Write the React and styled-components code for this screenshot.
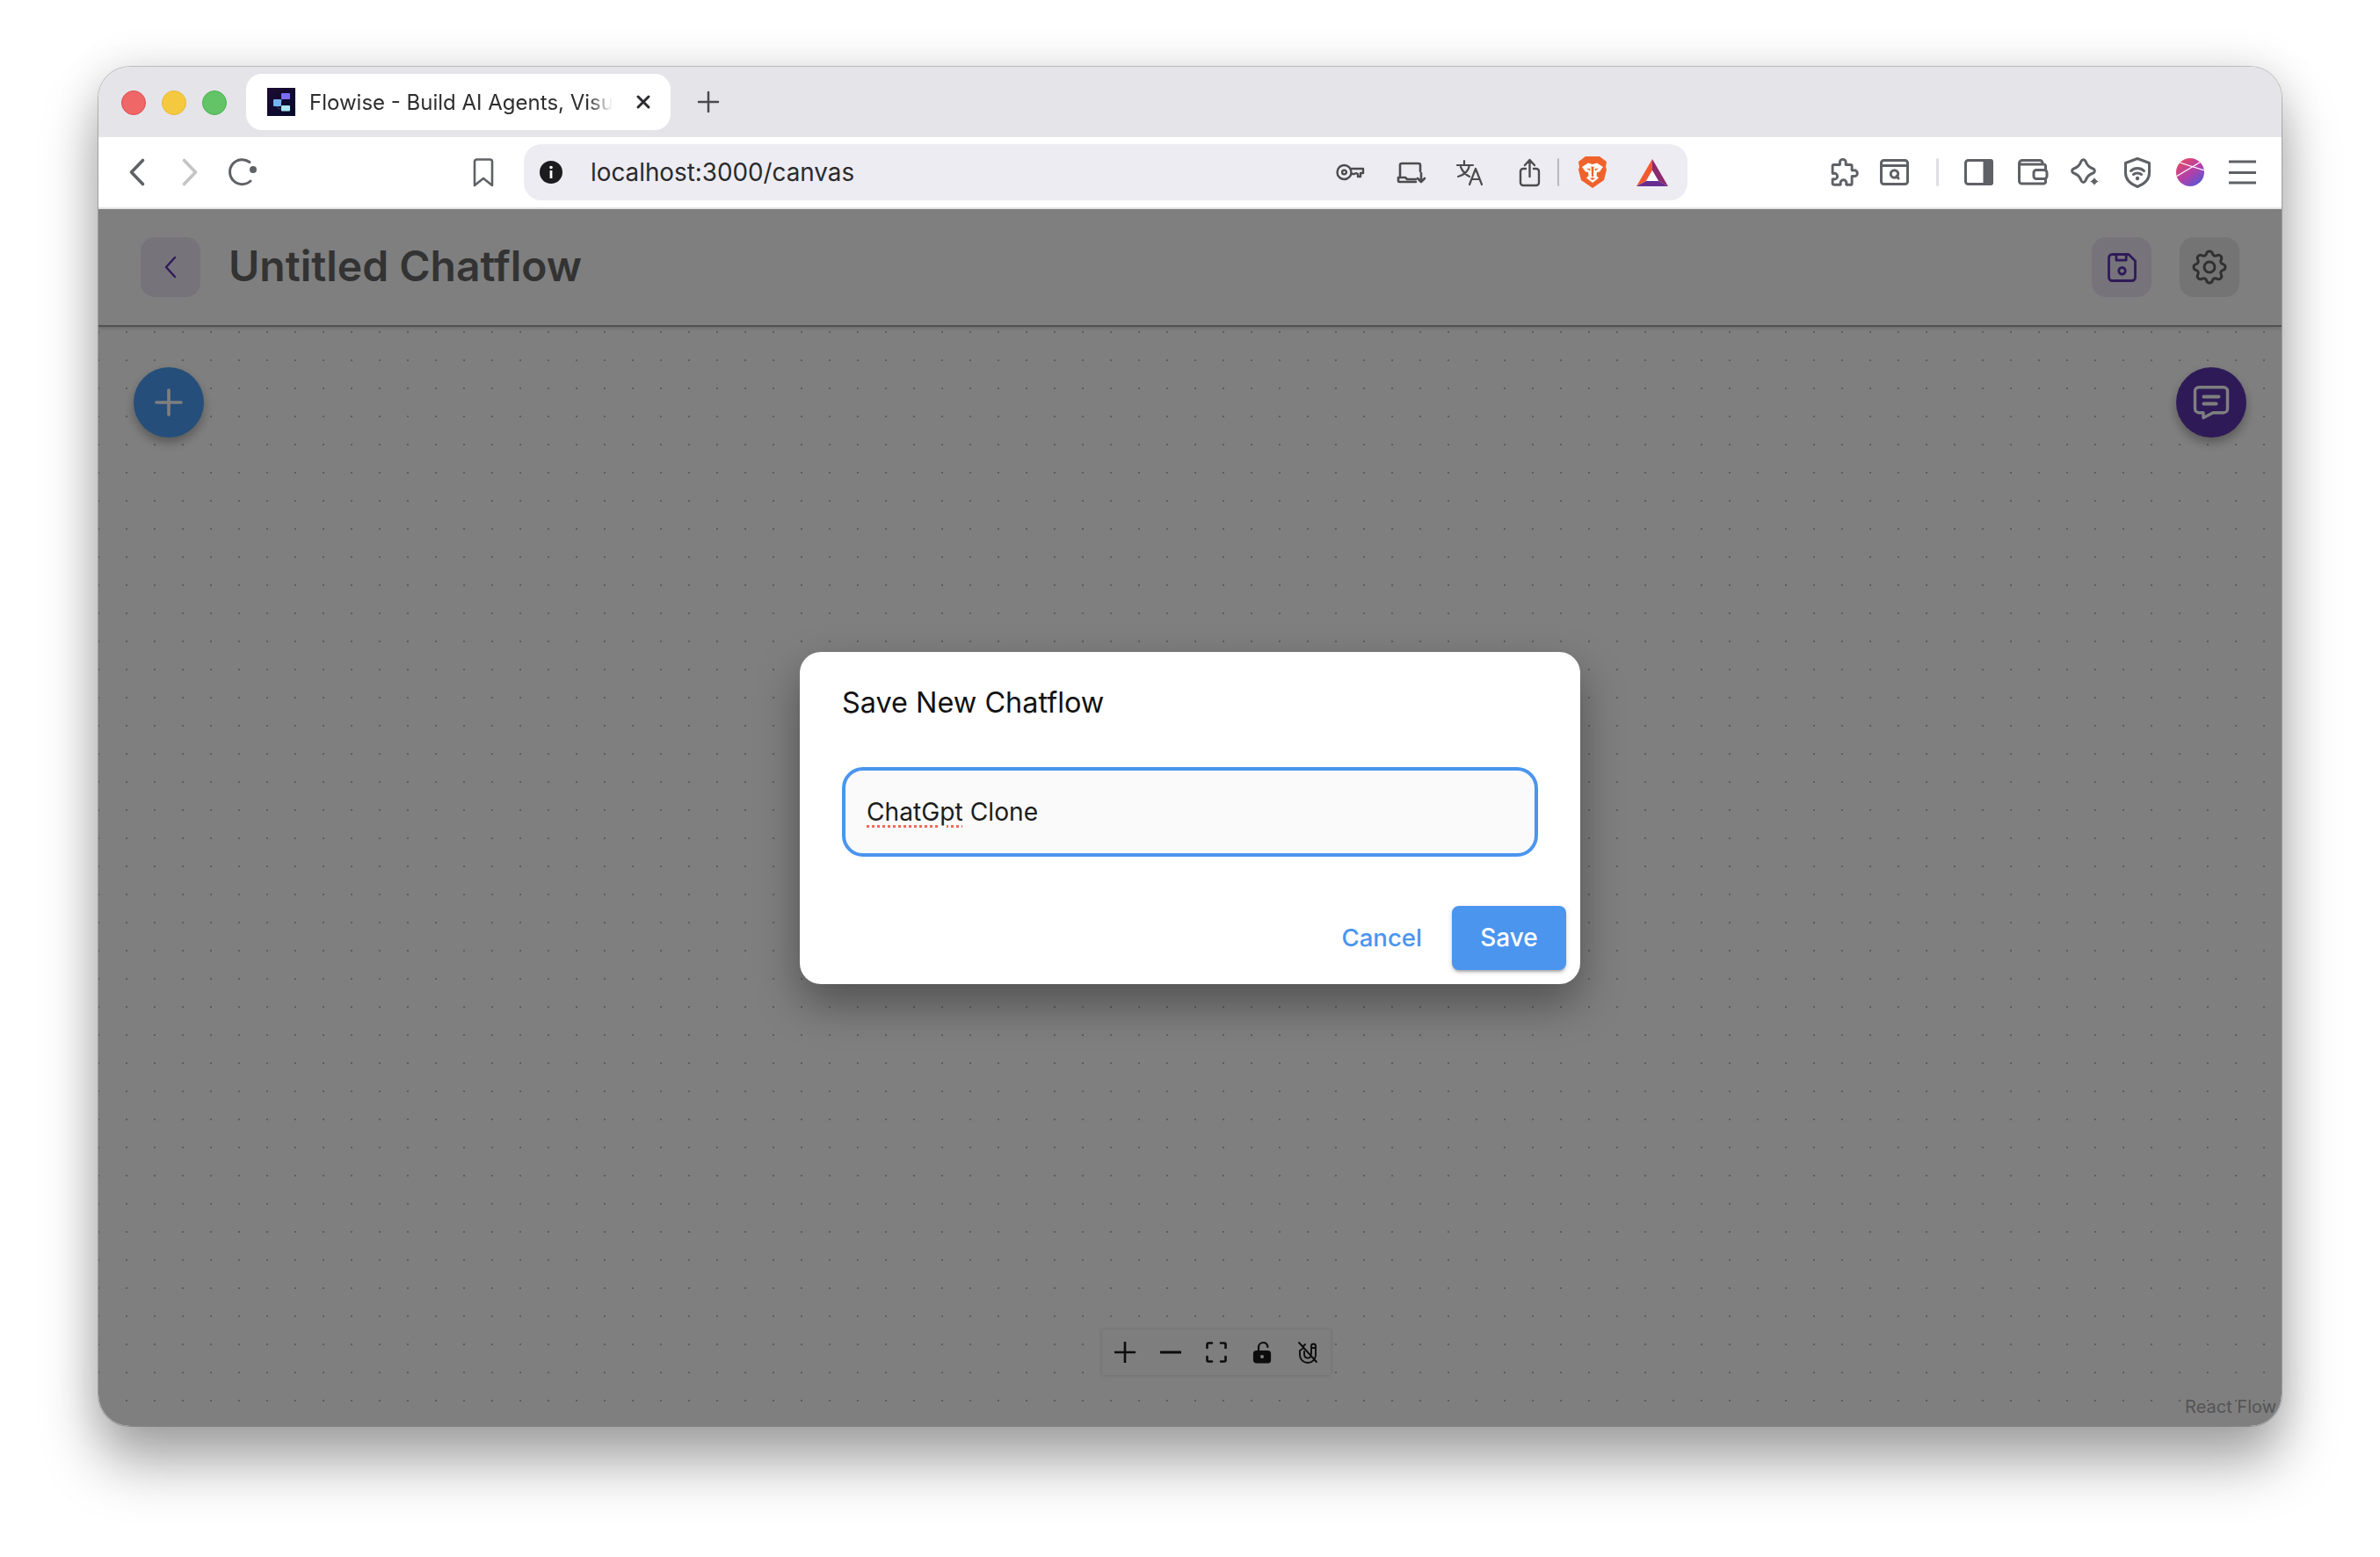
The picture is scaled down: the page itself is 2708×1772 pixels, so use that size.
import React from "react";
import styled, { createGlobalStyle } from "styled-components";

const Global = createGlobalStyle`
  html, body { margin: 0; padding: 0; background: #fff; }
  body { font-family: Inter, "Liberation Sans", sans-serif; width: 2708px; height: 1772px; overflow: hidden; }
  * { box-sizing: border-box; }
`;

const Page = styled.div`
  width: 2708px;
  height: 1772px;
  padding: 76px 112px 149px;
`;
const BrowserWindow = styled.div`
  width: 100%;
  height: 100%;
  display: flex;
  flex-direction: column;
  border-radius: 36px;
  overflow: hidden;
  background: #fff;
  box-shadow: 0 0 0 1px rgba(0, 0, 0, 0.2), 0 42px 64px rgba(0, 0, 0, 0.34), 0 0 50px rgba(0, 0, 0, 0.12);
`;
const TabStrip = styled.div`
  height: 80px;
  flex: none;
  display: flex;
  align-items: flex-start;
  padding: 8px 0 0 26px;
  background: #e4e4e9;
`;
const Light = styled.span`
  width: 28px;
  height: 28px;
  margin: 19px 18px 0 0;
  border-radius: 50%;
  background: ${(p) => p.$fill};
  border: 1px solid ${(p) => p.$edge};
  flex: none;
`;
const Tab = styled.div`
  width: 483px;
  height: 64px;
  margin-left: 4px;
  display: flex;
  align-items: center;
  padding: 0 0 0 24px;
  border-radius: 18px;
  background: #fff;
`;
const TabTitle = styled.div`
  width: 352px;
  margin-left: 16px;
  font-size: 24px;
  color: #2e2e30;
  white-space: nowrap;
  -webkit-mask-image: linear-gradient(to right, #000 90%, transparent 98%);
  mask-image: linear-gradient(to right, #000 90%, transparent 98%);
`;
const Toolbar = styled.div`
  height: 82px;
  flex: none;
  display: flex;
  align-items: center;
  padding: 0 0 0 36px;
  background: #fff;
  border-bottom: 2px solid #e6e6ea;
`;
const Icon = styled.svg`
  flex: none;
  display: block;
  margin-left: ${(p) => p.$ml || 0}px;
  overflow: visible;
  fill: none;
  stroke: ${(p) => p.$stroke || "#5f6166"};
  stroke-width: ${(p) => p.$sw || 3};
  stroke-linecap: round;
  stroke-linejoin: round;
`;
const NewTabIcon = styled(Icon)`
  margin-top: 21px;
`;
const UrlBar = styled.div`
  width: 1324px;
  height: 64px;
  margin-left: 34px;
  flex: none;
  display: flex;
  align-items: center;
  padding: 0 22px 0 18px;
  border-radius: 20px;
  background: #edecf2;
`;
const UrlText = styled.span`
  margin-left: 32px;
  font-size: 27.8px;
  color: #2a2a2c;
  flex: 1;
`;
const BarDivider = styled.span`
  width: ${(p) => p.$w}px;
  height: 32px;
  margin-left: ${(p) => p.$ml}px;
  background: ${(p) => p.$c};
  border-radius: 2px;
  flex: none;
`;

const AppArea = styled.div`
  position: relative;
  flex: 1;
  min-height: 0;
  display: flex;
  flex-direction: column;
`;
const Header = styled.header`
  height: 134px;
  flex: none;
  display: flex;
  align-items: center;
  padding: 0 48px;
  background: #fff;
  border-bottom: 2px solid #a2a2a2;
  box-shadow: 0 2px 4px rgba(0, 0, 0, 0.14);
  position: relative;
  z-index: 1;
`;
const SquareButton = styled.button`
  width: 68px;
  height: 68px;
  flex: none;
  padding: 0;
  border: 0;
  border-radius: 16px;
  display: flex;
  align-items: center;
  justify-content: center;
  background: ${(p) => p.$bg};
  margin-left: ${(p) => p.$ml || 0}px;
`;
const PageTitle = styled.h1`
  margin: 0 0 0 32px;
  padding-bottom: 3px;
  flex: 1;
  font-size: 48px;
  font-weight: 600;
  color: #666;
`;
const Canvas = styled.main`
  position: relative;
  flex: 1;
  background-color: #fff;
  background-image: radial-gradient(circle, #bcbcbc 1.2px, transparent 1.5px);
  background-size: 32px 32px;
  background-position: -16px -10px;
`;
const Fab = styled.button`
  position: absolute;
  top: 46px;
  ${(p) => p.$side}: 40px;
  width: 80px;
  height: 80px;
  padding: 0;
  border: 0;
  border-radius: 50%;
  display: flex;
  align-items: center;
  justify-content: center;
  background: ${(p) => p.$bg};
  box-shadow: 0 6px 12px rgba(0, 0, 0, 0.3);
`;
const Controls = styled.div`
  position: absolute;
  left: 1142px;
  bottom: 58px;
  display: flex;
  background: #fcfcfc;
  box-shadow: 0 0 5px rgba(0, 0, 0, 0.16);
`;
const ControlButton = styled.button`
  width: 52px;
  height: 52px;
  padding: 0;
  border: 0;
  background: transparent;
  display: flex;
  align-items: center;
  justify-content: center;
`;
const Attribution = styled.span`
  position: absolute;
  right: 6px;
  bottom: 10px;
  font-size: 20px;
  color: #aaa;
`;
const Overlay = styled.div`
  position: absolute;
  inset: 0;
  z-index: 2;
  display: flex;
  align-items: center;
  justify-content: center;
  background: rgba(0, 0, 0, 0.5);
`;
const Dialog = styled.div`
  width: 888px;
  height: 378px;
  display: flex;
  flex-direction: column;
  padding: 38px 16px 16px 48px;
  border-radius: 24px;
  background: #fff;
  box-shadow: 0 22px 50px rgba(0, 0, 0, 0.36);
`;
const DialogTitle = styled.h2`
  margin: 0;
  font-size: 32.4px;
  line-height: 40px;
  font-weight: 400;
  color: #111;
`;
const NameField = styled.div`
  width: 792px;
  height: 102px;
  margin-top: 53px;
  display: flex;
  align-items: center;
  padding: 0 24px;
  border: 4px solid #4a95ef;
  border-radius: 24px;
  background: #fafafa;
  font-size: 28.2px;
  color: #1c1c1c;
  white-space: pre;
`;
const Misspelled = styled.span`
  text-decoration: underline dotted #f0695c 3px;
  text-underline-offset: 5px;
`;
const DialogActions = styled.div`
  margin-top: auto;
  display: flex;
  align-items: center;
  justify-content: flex-end;
  gap: 34px;
`;
const CancelButton = styled.button`
  padding: 0;
  border: 0;
  background: none;
  font: 500 27.6px Inter, sans-serif;
  color: #4a95ef;
`;
const SaveButton = styled.button`
  width: 130px;
  height: 73px;
  border: 0;
  padding: 0;
  border-radius: 8px;
  font: 500 28px Inter, sans-serif;
  color: #fff;
  background: #4b95ef;
  box-shadow: 0 3px 3px -1px rgba(0, 0, 0, 0.25), 0 2px 6px rgba(0, 0, 0, 0.14);
`;

const Favicon = () => (
  <Icon width="32" height="32" viewBox="0 0 32 32" $sw={1}>
    <defs>
      <linearGradient id="fav" x1="0" y1="0" x2="1" y2="1">
        <stop offset="0" stopColor="#1d0b33" />
        <stop offset="1" stopColor="#040a2a" />
      </linearGradient>
    </defs>
    <rect width="32" height="32" fill="url(#fav)" stroke="none" />
    <path d="M16 16c1-4 1-7 2-7M11 21c1 3 3 3 6 3" stroke="#33506e" />
    <rect x="16" y="6" width="10" height="7" rx="1" fill="#7b6cf6" stroke="none" />
    <rect x="7" y="13" width="9" height="8" rx="1" fill="#72b3f5" stroke="none" />
    <rect x="16" y="20" width="10" height="6.5" rx="1" fill="#abe7f0" stroke="none" />
  </Icon>
);

const Brave = () => (
  <Icon width="32" height="36" viewBox="0 0 32 36" $ml={22} $stroke="none">
    <path fill="#f0622c" d="M8 0H24L28 3L32 6L31 12L32 15L29 27L16 36L3 27L0 15L1 12L0 6L4 3Z" />
    <path fill="#fff" d="M4 12L11 7.5L16 9L21 7.5L28 12L24 17.5L21 18L20.5 22L23 24.5L16 30L9 24.5L11.5 22L11 18L8 17.5Z" />
    <path fill="#f0622c" d="M9 13.5L13.5 14L13 16.5ZM23 13.5L18.5 14L19 16.5ZM14.5 11L16 12L17.5 11L17 23H15ZM13 25L16 24L19 25L16 27Z" />
  </Icon>
);

const Bat = () => (
  <Icon width="36" height="31" viewBox="0 0 36 31" $ml={34} $stroke="none">
    <polygon fill="#f15a30" points="18,0 18,13 11,25 0,31" />
    <polygon fill="#8c2b6e" points="18,0 36,31 25,25 18,13" />
    <polygon fill="#662d91" points="0,31 11,25 25,25 36,31" />
    <polygon fill="#fff" points="18,13 11,25 25,25" />
  </Icon>
);

const Avatar = () => (
  <Icon width="32" height="32" viewBox="0 0 32 32" $ml={29} $stroke="#fff" $sw={1.2}>
    <defs>
      <linearGradient id="ava" x1="0.15" y1="0.1" x2="0.8" y2="0.95">
        <stop offset="0" stopColor="#e2486b" />
        <stop offset="0.55" stopColor="#b040ac" />
        <stop offset="1" stopColor="#5a55d2" />
      </linearGradient>
      <clipPath id="avc"><circle cx="16" cy="16" r="16" /></clipPath>
    </defs>
    <circle cx="16" cy="16" r="16" fill="url(#ava)" stroke="none" />
    <path clipPath="url(#avc)" d="M0 21L30 3M4 5L32 14" />
  </Icon>
);

export default function App() {
  return (
    <Page>
      <Global />
      <BrowserWindow>
        <TabStrip>
          <Light $fill="#ef6767" $edge="#e24b4e" />
          <Light $fill="#f4c940" $edge="#e9b82e" />
          <Light $fill="#62c467" $edge="#4bb150" />
          <Tab>
            <Favicon />
            <TabTitle>Flowise - Build AI Agents, Visu</TabTitle>
            <Icon width="16" height="16" viewBox="0 0 16 16" $ml={20} $stroke="#2c2c2e">
              <path d="M2 2l12 12M14 2L2 14" />
            </Icon>
          </Tab>
          <NewTabIcon width="22" height="22" viewBox="0 0 22 22" $ml={32} $stroke="#4a4a4e" $sw={2.5}>
            <path d="M11 0v22M0 11h22" />
          </NewTabIcon>
        </TabStrip>

        <Toolbar>
          <Icon width="16" height="30" viewBox="0 0 16 30" $sw={3.6}><path d="M14.5 1.5L1.5 15l13 13.5" /></Icon>
          <Icon width="16" height="30" viewBox="0 0 16 30" $ml={44} $sw={3.6} $stroke="#c4c4c4"><path d="M1.5 1.5L14.5 15l-13 13.5" /></Icon>
          <Icon width="30" height="32" viewBox="0 0 30 32" $ml={36}>
            <path d="M24 4.5A14 14 0 1 0 25 26" />
            <circle cx="28" cy="13" r="4" fill="#5f6166" stroke="none" />
          </Icon>
          <Icon width="24" height="33" viewBox="0 0 24 33" $ml={248} $sw={2.6}>
            <path d="M2 4a2.5 2.5 0 0 1 2.5-2.5h15A2.5 2.5 0 0 1 22 4v27l-10-8-10 8z" />
          </Icon>
          <UrlBar>
            <Icon width="26" height="26" viewBox="0 0 26 26" $stroke="none">
              <circle cx="13" cy="13" r="13" fill="#1c1c1e" />
              <circle cx="13" cy="7.5" r="1.8" fill="#fff" />
              <rect x="11.6" y="11" width="2.8" height="9" fill="#fff" />
            </Icon>
            <UrlText>localhost:3000/canvas</UrlText>
            <Icon width="32" height="20" viewBox="0 0 32 20" $stroke="#4c4c50" $sw={2.4}>
              <circle cx="9.5" cy="10" r="8" />
              <circle cx="9.5" cy="10" r="2.4" />
              <path d="M17.5 6H31v5h-3v4h-3v-3l-2-1-2 1h-3.5" />
            </Icon>
            <Icon width="32" height="23" viewBox="0 0 32 23" $ml={38} $stroke="#4c4c50" $sw={2.6}>
              <path d="M3 15V3a2 2 0 0 1 2-2h19a2 2 0 0 1 2 2v7M1 17v4a1 1 0 0 0 1 1h19M1 17h8l2 2h10M27 12v9.5M23 18l4 4 4-4" />
            </Icon>
            <Icon width="30" height="28" viewBox="0 0 30 28" $ml={35} $stroke="#4c4c50" $sw={2.2}>
              <path d="M1 6h18M9 1v5M15 6c-1 6-6 11-13 13M5 8c2 5 6 9 10 11M15 28l7-18 7 18M17.5 22h9" />
            </Icon>
            <Icon width="23" height="31" viewBox="0 0 23 31" $ml={42} $stroke="#4c4c50" $sw={2.4}>
              <path d="M7 11H4a3 3 0 0 0-3 3v13a3 3 0 0 0 3 3h15a3 3 0 0 0 3-3V14a3 3 0 0 0-3-3h-3M11.5 20V2M6 7l5.5-6L17 7" />
            </Icon>
            <BarDivider $w={2} $ml={20} $c="#b9b9bd" />
            <Brave />
            <Bat />
          </UrlBar>
          <Icon width="33" height="33" viewBox="0 0 24 24" $ml={161} $sw={2.1}>
            <path d="M9 3.5a2.5 2.5 0 0 1 5 0c0 1-.5 1.5 0 2h4a1 1 0 0 1 1 1V10c.5.5 1 0 2 0a2.500 2.500 0 0 1 0 5c-1 0-1.500-.5-2 0v6a1 1 0 0 1-1 1h-3.500c-.5-.5 0-1 0-1.500a2.500 2.500 0 0 0-5 0c0 .5.5 1 0 1.500H4a1 1 0 0 1-1-1v-3.500c.5-.5 1 0 1.500 0a2.500 2.500 0 0 0 0-5c-.5 0-1 .5-1.500 0V6.500a1 1 0 0 1 1-1h5c.5-.5 0-1 0-2z" />
          </Icon>
          <Icon width="33" height="30" viewBox="0 0 33 30" $ml={25}>
            <rect x="1.5" y="1.5" width="30" height="27" rx="3" />
            <path d="M1.500 7.500h30M21 22l-2-2.500" />
            <circle cx="16.5" cy="17" r="4.2" />
          </Icon>
          <BarDivider $w={3} $ml={31} $c="#dfdfe3" />
          <Icon width="33" height="30" viewBox="0 0 33 30" $ml={29}>
            <path d="M23 1.500h7a1.500 1.500 0 0 1 1.500 1.500v24a1.500 1.500 0 0 1-1.500 1.500h-7z" fill="#5f6166" />
            <rect x="1.5" y="1.5" width="30" height="27" rx="3" />
          </Icon>
          <Icon width="33" height="30" viewBox="0 0 33 30" $ml={28}>
            <path d="M28 6V4.500a3 3 0 0 0-3-3H5a3.500 3.500 0 0 0-3.500 3.500v20a3 3 0 0 0 3 3h25a3 3 0 0 0 2-1.500V7.500a2 2 0 0 0-2-1.500H1.500" />
            <rect x="18" y="12.5" width="15" height="10" rx="3" fill="#fff" />
          </Icon>
          <Icon width="34" height="33" viewBox="0 0 34 33" $ml={26}>
            <path d="M13 3.500c1-2.500 4-2.500 5 0 1.500 4.500 4 7 8.500 8.500 2.500 1 2.500 4 0 5-4.500 1.500-7 4-8.500 8.500-1 2.500-4 2.500-5 0-1.500-4.500-4-7-8.500-8.500-2.500-1-2.500-4 0-5 4.500-1.500 7-4 8.500-8.500z" />
            <path d="M28 20.500c.7 3 1.800 4.300 5.500 6-3.700 1.700-4.800 3-5.500 6-.7-3-1.800-4.300-5.500-6 3.700-1.700 4.800-3 5.500-6z" fill="#5f6166" stroke="#fff" strokeWidth="1" />
          </Icon>
          <Icon width="30" height="35" viewBox="0 0 30 35" $ml={28}>
            <path d="M15 1.500L28.500 6.500V18c0 7.500-6 12.500-13.500 15.500C7.500 30.500 1.500 25.500 1.500 18V6.500z" />
            <path d="M7.500 15.500c4-4 11-4 15 0M10.500 19.500c2.500-2 6.500-2 9 0" />
            <circle cx="15" cy="24" r="2.2" fill="#5f6166" stroke="none" />
          </Icon>
          <Avatar />
          <Icon width="33" height="28" viewBox="0 0 33 28" $ml={27}>
            <path d="M1 2h31M1 14.500h31M1 26h31" strokeLinecap="butt" />
          </Icon>
        </Toolbar>

        <AppArea>
          <Header>
            <SquareButton $bg="#ede7f6">
              <Icon width="14" height="24" viewBox="0 0 14 24" $stroke="#5e35b1" $sw={2.4}><path d="M12 1L2 12l10 11" /></Icon>
            </SquareButton>
            <PageTitle>Untitled Chatflow</PageTitle>
            <SquareButton $bg="#ede7f6">
              <Icon width="45" height="45" viewBox="0 0 24 24" $stroke="#5e35b1" $sw={1.5}>
                <path d="M6 4h10l4 4v10a2 2 0 0 1-2 2H6a2 2 0 0 1-2-2V6a2 2 0 0 1 2-2" />
                <circle cx="12" cy="14" r="2" />
                <path d="M8.500 4v3.500h6V4" />
              </Icon>
            </SquareButton>
            <SquareButton $bg="#e8e8e8" $ml={32}>
              <Icon width="48" height="48" viewBox="0 0 24 24" $stroke="#616161" $sw={1.5}>
                <path d="M10.325 4.317c.426-1.756 2.924-1.756 3.350 0a1.724 1.724 0 0 0 2.573 1.066c1.543-.94 3.310.826 2.370 2.370a1.724 1.724 0 0 0 1.065 2.572c1.756.426 1.756 2.924 0 3.350a1.724 1.724 0 0 0-1.066 2.573c.94 1.543-.826 3.310-2.370 2.370a1.724 1.724 0 0 0-2.572 1.065c-.426 1.756-2.924 1.756-3.350 0a1.724 1.724 0 0 0-2.573-1.066c-1.543.94-3.310-.826-2.370-2.370a1.724 1.724 0 0 0-1.065-2.572c-1.756-.426-1.756-2.924 0-3.350a1.724 1.724 0 0 0 1.066-2.573c-.94-1.543.826-3.310 2.370-2.370 1 .608 2.296.07 2.572-1.065z" />
                <circle cx="12" cy="12" r="3" />
              </Icon>
            </SquareButton>
          </Header>
          <Canvas>
            <Fab $side="left" $bg="#4a9cf5">
              <Icon width="32" height="32" viewBox="0 0 32 32" $stroke="#fff" $sw={3.6}><path d="M16 2v28M2 16h28" /></Icon>
            </Fab>
            <Fab $side="right" $bg="#5e35b1">
              <Icon width="40" height="38" viewBox="0 0 40 38" $stroke="#fff" $sw={3.4}>
                <path d="M6 1.700h28a4.500 4.500 0 0 1 4.500 4.500v20a4.500 4.500 0 0 1-4.500 4.500H22L11 36.500v-5.800H6a4.500 4.500 0 0 1-4.500-4.500v-20A4.500 4.500 0 0 1 6 1.700z" />
                <path d="M11.500 12.500h17M11.500 20.500h14" strokeWidth="4" />
              </Icon>
            </Fab>
            <Controls>
              <ControlButton>
                <Icon width="24" height="24" viewBox="0 0 24 24" $stroke="#1a1a1a" $sw={2.6}><path d="M12 0v24M0 12h24" strokeLinecap="butt" /></Icon>
              </ControlButton>
              <ControlButton>
                <Icon width="24" height="4" viewBox="0 0 24 4" $stroke="#1a1a1a" $sw={3}><path d="M0 2h24" strokeLinecap="butt" /></Icon>
              </ControlButton>
              <ControlButton>
                <Icon width="24" height="24" viewBox="0 0 24 24" $stroke="#1a1a1a" $sw={2.6}>
                  <path d="M1.500 7V3A1.500 1.500 0 0 1 3 1.500h4M17 1.500h4A1.500 1.500 0 0 1 22.500 3v4M22.500 17v4a1.500 1.500 0 0 1-1.500 1.500h-4M7 22.500H3A1.500 1.500 0 0 1 1.500 21v-4" />
                </Icon>
              </ControlButton>
              <ControlButton>
                <Icon width="20" height="24" viewBox="0 0 20 24" $stroke="#1a1a1a" $sw={2.2}>
                  <rect x="1" y="11" width="18" height="12.500" rx="2.500" fill="#1a1a1a" />
                  <path d="M6 11V6.500C6 3 8.500 1 11.500 1S16 3 16.500 6" />
                  <circle cx="10" cy="17" r="2" fill="#fff" stroke="none" />
                </Icon>
              </ControlButton>
              <ControlButton>
                <Icon width="22" height="24" viewBox="0 0 22 24" $stroke="#1a1a1a" $sw={1.9}>
                  <path d="M2 10v5a9 9 0 0 0 18 0V5a2.500 2.500 0 0 0-5 0v9M2 10l3-2M6 5l2-2M15 7h5M7 11v3.500a4 4 0 0 0 7.500 2M1 1l20 22" />
                </Icon>
              </ControlButton>
            </Controls>
            <Attribution>React Flow</Attribution>
          </Canvas>
          <Overlay>
            <Dialog>
              <DialogTitle>Save New Chatflow</DialogTitle>
              <NameField><Misspelled>ChatGpt</Misspelled> Clone</NameField>
              <DialogActions>
                <CancelButton>Cancel</CancelButton>
                <SaveButton>Save</SaveButton>
              </DialogActions>
            </Dialog>
          </Overlay>
        </AppArea>
      </BrowserWindow>
    </Page>
  );
}
